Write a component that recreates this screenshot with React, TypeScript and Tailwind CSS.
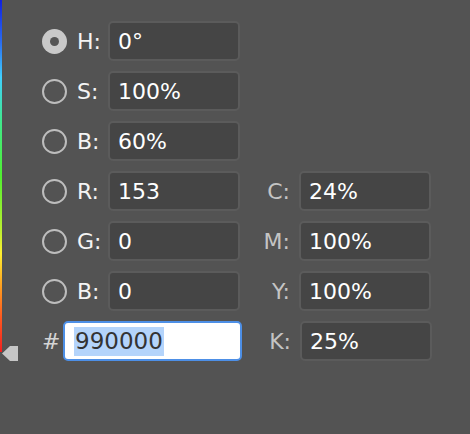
import React from "react";

type Row = {
  label: string;
  value: string;
  selected?: boolean;
  right?: { label: string; value: string };
};

const rows: Row[] = [
  { label: "H:", value: "0°", selected: true },
  { label: "S:", value: "100%" },
  { label: "B:", value: "60%" },
  { label: "R:", value: "153", right: { label: "C:", value: "24%" } },
  { label: "G:", value: "0", right: { label: "M:", value: "100%" } },
  { label: "B:", value: "0", right: { label: "Y:", value: "100%" } },
];

function Radio({ on }: { on?: boolean }) {
  return on ? (
    <div className="w-[25px] h-[25px] rounded-full bg-[#c9c9c9] flex items-center justify-center">
      <div className="w-[9px] h-[9px] rounded-full bg-[#555555]" />
    </div>
  ) : (
    <div className="w-[25px] h-[25px] rounded-full border-2 border-[#bdbdbd]" />
  );
}

function Field({ value }: { value: string }) {
  return (
    <div className="w-[132px] h-[40px] rounded-[5px] border-2 border-[#5b5b5b] bg-[#454545] flex items-center pl-[8px] text-[22px] text-white">
      {value}
    </div>
  );
}

export default function App() {
  return (
    <div
      className="relative w-[470px] h-[434px] bg-[#535353] overflow-hidden"
      style={{ fontFamily: '"DejaVu Sans", "Open Sans", sans-serif' }}
    >
      {/* hue strip */}
      <div className="absolute left-0 top-0 w-[2px] h-[352px] bg-[linear-gradient(to_bottom,#1020e0_0%,#2a6cf0_12%,#40d0ff_22%,#40e890_34%,#50f030_50%,#c0f030_66%,#fff030_72%,#ff9a20_82%,#ff5a20_90%,#f02020_100%)]" />
      <svg className="absolute left-[2px] top-[346px]" width="16" height="15" viewBox="0 0 16 15">
        <polygon points="0,7.5 8,0 16,0 16,15 8,15" fill="#c6c6c6" />
      </svg>

      <div className="flex flex-col gap-[10px] pt-[21px] pl-[42px]">
        {rows.map((r, i) => (
          <div key={i} className="flex items-center h-[40px]">
            <Radio on={r.selected} />
            <div className="w-[41px] pl-[10px] text-[22px] text-[#f4f4f4]">{r.label}</div>
            <Field value={r.value} />
            {r.right && (
              <>
                <div className="w-[59px] pr-[9px] text-right text-[22px] text-[#c4c4c4]">
                  {r.right.label}
                </div>
                <Field value={r.right.value} />
              </>
            )}
          </div>
        ))}
        <div className="flex items-center h-[40px]">
          <div className="w-[21px] pr-[10px] text-[22px] text-[#d4d4d4] text-right">#</div>
          <div className="w-[179px] h-[40px] rounded-[5px] border-2 border-[#4d8fe6] bg-white flex items-center pl-[9px] text-[23px] text-[#333333]">
            <span className="bg-[#b4d4fb] leading-[29px] px-[1px]">990000</span>
          </div>
          <div className="w-[58px] pr-[9px] text-right text-[22px] text-[#c4c4c4]">K:</div>
          <Field value="25%" />
        </div>
      </div>
    </div>
  );
}
